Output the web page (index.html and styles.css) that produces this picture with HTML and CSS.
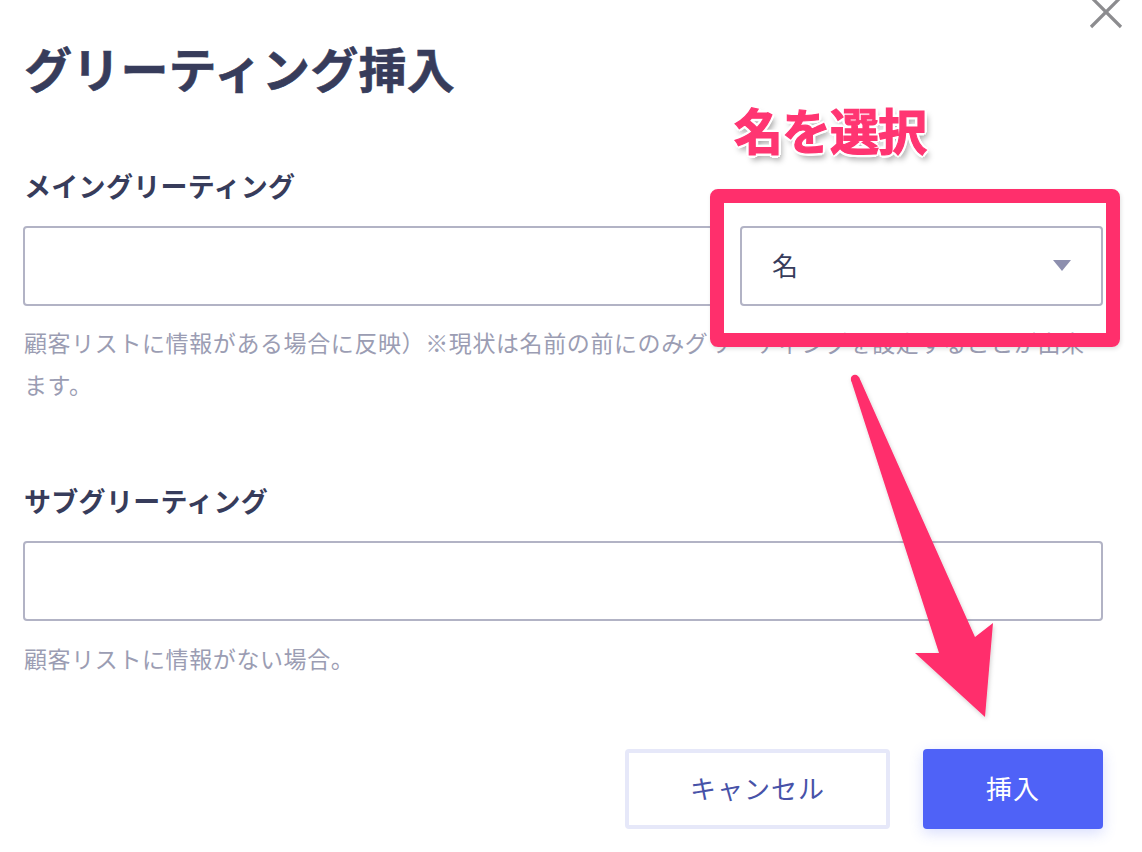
FILE: index.html
```html
<!DOCTYPE html>
<html lang="ja">
<head>
<meta charset="utf-8">
<title>グリーティング挿入</title>
<link rel="stylesheet" href="styles.css">
</head>
<body>
<div class="dialog">
  <button class="close" aria-label="閉じる">
    <svg width="40" height="40" viewBox="0 0 40 40"><path d="M5 5 L35 35 M35 5 L5 35" stroke="#8c8c8f" stroke-width="3.2" stroke-linecap="butt" fill="none"/></svg>
  </button>

  <h1 class="title">グリーティング挿入</h1>

  <section class="field field-main">
    <div class="label">メイングリーティング</div>
    <div class="row">
      <div class="input"></div>
      <div class="select">
        <span class="select-value">名</span>
        <span class="caret"></span>
      </div>
    </div>
    <p class="help">顧客リストに情報がある場合に反映）※現状は名前の前にのみグリーティングを設定することが出来ます。</p>
  </section>

  <section class="field field-sub">
    <div class="label">サブグリーティング</div>
    <div class="row">
      <div class="input"></div>
    </div>
    <p class="help">顧客リストに情報がない場合。</p>
  </section>

  <div class="actions">
    <button class="btn btn-cancel">キャンセル</button>
    <button class="btn btn-primary">挿入</button>
  </div>

  <div class="annot-text">名を選択</div>
  <div class="annot-box"></div>
  <svg class="annot-arrow" width="1142" height="852" viewBox="0 0 1142 852">
    <defs>
      <filter id="sh" x="-20%" y="-20%" width="140%" height="140%">
        <feDropShadow dx="1" dy="2" stdDeviation="2" flood-color="#000" flood-opacity="0.18"/>
      </filter>
    </defs>
    <g filter="url(#sh)" fill="#ff2f6c">
      <circle cx="855" cy="379" r="4.2"/>
      <polygon points="851,380 939,653 915,653 985,717 993,623 975,637 859,377"/>
    </g>
  </svg>
</div>
</body>
</html>
```

FILE: styles.css
```css
* {
  box-sizing: border-box;
}

html, body {
  margin: 0;
  padding: 0;
  background: #ffffff;
}

body {
  font-family: "Noto Sans CJK JP", "Noto Sans", sans-serif;
  color: #373c5b;
}

.dialog {
  position: relative;
  width: 1142px;
  height: 852px;
  padding: 43px 39px 0 23px;
  overflow: hidden;
}

.close {
  position: absolute;
  top: -8px;
  right: 16px;
  width: 40px;
  height: 40px;
  padding: 0;
  border: 0;
  background: transparent;
}

.close svg {
  display: block;
}

.title {
  margin: 0 0 0 1px;
  font-size: 48px;
  line-height: 48px;
  font-weight: 700;
  color: #373c5b;
  letter-spacing: 0.2px;
  -webkit-text-stroke: 0.6px #373c5b;
}

.field-main {
  margin-top: 81px;
}

.field-sub {
  margin-top: 82px;
}

.label {
  margin-left: 1px;
  font-size: 27px;
  line-height: 27px;
  font-weight: 700;
  color: #373c5b;
  letter-spacing: 0.3px;
}

.row {
  display: flex;
  gap: 24px;
  margin-top: 27px;
}

.input {
  flex: 1;
  height: 80px;
  border: 2px solid #b2b3c5;
  border-radius: 4px;
  background: #fff;
}

.select {
  width: 363px;
  height: 80px;
  border: 2px solid #b2b3c5;
  border-radius: 4px;
  background: #fff;
  display: flex;
  align-items: center;
  justify-content: space-between;
  padding: 0 30px 4px 30px;
}

.select-value {
  font-size: 26px;
  color: #373c5b;
}

.caret {
  width: 0;
  height: 0;
  margin-top: 2px;
  border-left: 9px solid transparent;
  border-right: 9px solid transparent;
  border-top: 11px solid #8d8fae;
}

.help {
  margin: 15px 0 0 1px;
  font-size: 23px;
  line-height: 42px;
  letter-spacing: 0.6px;
  color: #9b9db3;
}

.field-sub .help {
  margin-top: 16px;
}

.actions {
  display: flex;
  justify-content: flex-end;
  gap: 33px;
  margin-top: 70px;
}

.btn {
  height: 80px;
  border-radius: 4px;
  font-family: "Noto Sans CJK JP", "Noto Sans", sans-serif;
  font-size: 26px;
  letter-spacing: 1px;
  padding-bottom: 4px;
  cursor: pointer;
}

.btn-cancel {
  width: 265px;
  background: #fff;
  border: 4px solid #e6e8f9;
  color: #4752a8;
}

.btn-primary {
  width: 180px;
  background: #4f62f7;
  border: 0;
  color: #fff;
  box-shadow: 0 4px 14px rgba(79, 98, 247, 0.22);
}

/* annotation overlays */
.annot-text {
  position: absolute;
  left: 734px;
  top: 104px;
  font-size: 49px;
  line-height: 49px;
  font-weight: 700;
  color: #ff3572;
  letter-spacing: -1px;
  -webkit-text-stroke: 1.2px #ff3572;
  text-shadow:
    3px 0 0 #fff, -3px 0 0 #fff, 0 3px 0 #fff, 0 -3px 0 #fff,
    2px 2px 0 #fff, -2px -2px 0 #fff, 2px -2px 0 #fff, -2px 2px 0 #fff,
    3px 5px 6px rgba(0, 0, 0, 0.4);
}

.annot-box {
  position: absolute;
  left: 710px;
  top: 189px;
  width: 410px;
  height: 158px;
  border: 14px solid #ff2f6c;
  border-radius: 8px;
  box-shadow: 1px 2px 4px rgba(0, 0, 0, 0.12);
}

.annot-arrow {
  position: absolute;
  left: 0;
  top: 0;
  pointer-events: none;
}
```
